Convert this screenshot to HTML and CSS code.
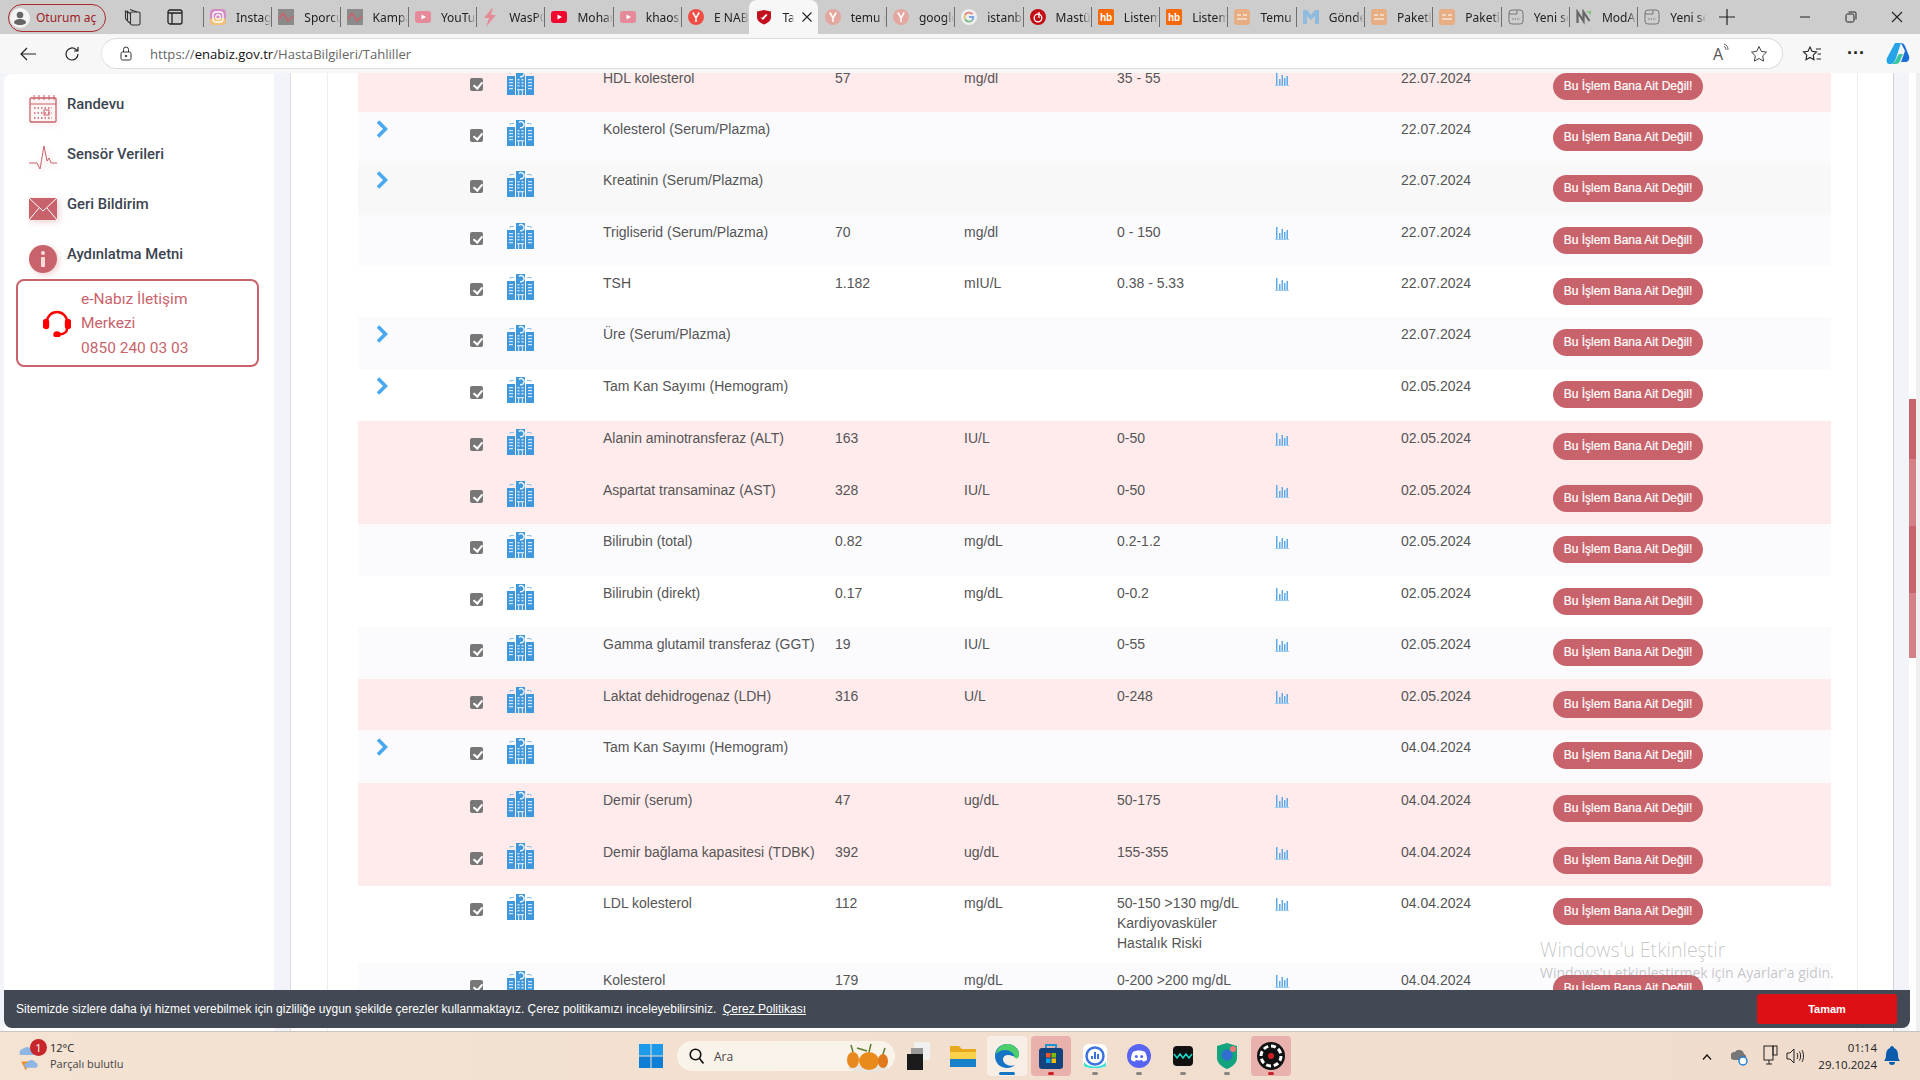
FILE: index.html
```html
<!DOCTYPE html>
<html lang="tr">
<head>
<meta charset="utf-8">
<title>Tahliller</title>
<link rel="stylesheet" href="styles.css">
</head>
<body>
<svg class="defs" width="0" height="0" aria-hidden="true">
  <defs>
    <symbol id="building" viewBox="0 0 27 26">
      <path fill="#3f98dc" d="M9 0h9v26H9zM0 7h8v19H0zM19 7h8v19h-8z"/>
      <path fill="none" stroke="#8ec2ea" stroke-width="1" d="M3 5V3.500h4M24 5V3.500h-4"/>
      <path fill="none" stroke="#eaf4fc" stroke-width="1.400" d="M12 2.500a3 3 0 1 1 1 5"/>
      <path fill="#cfe4f6" d="M10.500 10h2v1.500h-2zM14.500 10h2v1.500h-2zM10.500 13h2v1.500h-2zM14.500 13h2v1.500h-2zM10.500 16h2v1.500h-2zM14.500 16h2v1.500h-2zM2 10h4v1.200H2zM2 13h4v1.200H2zM2 16h4v1.200H2zM2 19h4v1.200H2zM21 10h4v1.200h-4zM21 13h4v1.200h-4zM21 16h4v1.200h-4zM21 19h4v1.200h-4zM10 20h7v1.200h-7zM11 21h1.200v5H11zM14.800 21H16v5h-1.200z"/>
    </symbol>
    <symbol id="chart" viewBox="0 0 14 13">
      <path fill="#5fabe8" d="M1 0h1.500v12H1zM4 6h1.500v6H4zM6.500 2H8v10H6.500zM9 5h1.500v7H9zM11.500 3H13v9h-1.500z"/>
      <path fill="#9ccdf2" d="M0 12h14v1H0z"/>
    </symbol>
    <symbol id="chev" viewBox="0 0 12 18">
      <path fill="none" stroke="#4aa8ee" stroke-width="3.600" d="M2 1.500 9.500 9 2 16.500"/>
    </symbol>
    <symbol id="ig" viewBox="0 0 16 16">
      <rect width="16" height="16" rx="4" fill="#d58bc4"/>
      <rect x="0" y="9" width="16" height="7" rx="3" fill="#f0c27a"/>
      <rect x="3" y="3" width="10" height="10" rx="3" fill="none" stroke="#fff" stroke-width="1.300"/>
      <circle cx="8" cy="8" r="2.300" fill="none" stroke="#fff" stroke-width="1.200"/>
    </symbol>
    <symbol id="wave" viewBox="0 0 16 16">
      <rect width="16" height="16" fill="#8b8b8b"/>
      <path fill="none" stroke="#c9646c" stroke-width="1.600" d="M1 10 5 4l5 8 5-5"/>
    </symbol>
    <symbol id="yt" viewBox="0 0 16 16">
      <rect y="2" width="16" height="12" rx="3" fill="currentColor"/>
      <path fill="#fff" d="M6.500 5.500 11 8l-4.500 2.500z"/>
    </symbol>
    <symbol id="bolt" viewBox="0 0 16 20">
      <path fill="#e58c97" d="M10 0 1 11h5l-3 9 10-12H8z"/>
    </symbol>
    <symbol id="yan" viewBox="0 0 16 16">
      <circle cx="8" cy="8" r="8" fill="currentColor"/>
      <path fill="none" stroke="#fff" stroke-width="1.500" d="M4.800 3.500 8 9l3.200-5.500M8 9v4"/>
    </symbol>
    <symbol id="shield" viewBox="0 0 16 16">
      <path fill="#c2101e" d="M1 2.500 8 1l7 1.500V8c0 4-3.500 6-7 7.500C4.500 14 1 12 1 8z"/>
      <path fill="#fff" d="m4 8 2 1 4-4 1.500 1L7 11z"/>
    </symbol>
    <symbol id="goog" viewBox="0 0 16 16">
      <circle cx="8" cy="8" r="8" fill="#efefef"/>
      <path fill="none" stroke="#e2857b" stroke-width="1.800" d="M11.500 5.300A4.500 4.500 0 0 0 4 6"/>
      <path fill="none" stroke="#e3c566" stroke-width="1.800" d="M4 6a4.500 4.500 0 0 0 0 4"/>
      <path fill="none" stroke="#7fbb8b" stroke-width="1.800" d="M4 10a4.500 4.500 0 0 0 7.500 1"/>
      <path fill="none" stroke="#7da5ea" stroke-width="1.800" d="M8 8h4.300a4.500 4.500 0 0 1-.8 3"/>
    </symbol>
    <symbol id="mastu" viewBox="0 0 16 16">
      <circle cx="8" cy="8" r="8" fill="#c20d14"/>
      <circle cx="8" cy="9" r="3.800" fill="none" stroke="#fff" stroke-width="1.300"/>
      <path stroke="#fff" stroke-width="1.300" d="M9 3v6"/>
    </symbol>
    <symbol id="hb" viewBox="0 0 16 16">
      <rect width="16" height="16" rx="1.500" fill="#f46a0a"/>
      <text x="8" y="12" text-anchor="middle" class="hbt">hb</text>
    </symbol>
    <symbol id="temu" viewBox="0 0 16 16">
      <rect width="16" height="16" rx="3" fill="#e6ae82"/>
      <path fill="none" stroke="#fff" stroke-width="1" d="M3 6h4M9 6h4M3 10h10"/>
    </symbol>
    <symbol id="mail" viewBox="0 0 16 16">
      <path fill="#8fbbdf" d="M0 1h4l4 5 4-5h4v14h-4V7l-4 4-4-4v8H0z"/>
    </symbol>
    <symbol id="newt" viewBox="0 0 16 16">
      <rect x="1" y="1" width="14" height="14" rx="3" fill="none" stroke="#777" stroke-width="1"/>
      <path stroke="#777" fill="none" d="M1 5h8V1"/>
      <path stroke="#777" stroke-dasharray="1.500 1" d="M4 10h8"/>
    </symbol>
    <symbol id="mod" viewBox="0 0 16 16">
      <path fill="none" stroke="#666" stroke-width="2.200" d="M1.500 14V3l6 9V3l6 9"/>
      <path fill="#7fc37f" d="M10 2h5v4z"/>
    </symbol>
  </defs>
</svg>

<header class="tabbar">
  <div class="profile">
    <span class="avatar"><svg width="20" height="20" viewBox="0 0 20 20"><circle cx="10" cy="10" r="10" fill="#f4f4f4"/><circle cx="10" cy="7" r="3.300" fill="#666"/><path fill="#666" d="M4 15c0-3 3-4 6-4s6 1 6 4c-1.500 1.500-3.500 2-6 2s-4.500-.5-6-2z"/></svg></span>
    <span class="profile-label">Oturum aç</span>
  </div>
  <span class="chrome-ico ws"><svg width="18" height="18" viewBox="0 0 18 18" fill="none" stroke="#333" stroke-width="1.100"><rect x="6.500" y="4" width="9.500" height="13" rx="1.500"/><path d="M6.500 15.500 3.500 13V3.500l3 2.500M3.500 13 1.500 10.500V3l2 1.500M6 1.500l7 2.500"/></svg></span>
  <span class="chrome-ico vt"><svg width="16" height="16" viewBox="0 0 16 16" fill="none" stroke="#222" stroke-width="1.300"><rect x="1" y="1" width="14" height="14" rx="2"/><path d="M1 4h14M5 4v11"/></svg></span>
  <nav class="tabs">
    <div class="tab"><svg class="fav"><use href="#ig"/></svg><span class="ttl">Instagram</span></div>
    <div class="tab"><svg class="fav"><use href="#wave"/></svg><span class="ttl">Sporcu</span></div>
    <div class="tab"><svg class="fav"><use href="#wave"/></svg><span class="ttl">Kampanya</span></div>
    <div class="tab"><svg class="fav pink"><use href="#yt"/></svg><span class="ttl">YouTube</span></div>
    <div class="tab"><svg class="fav tall"><use href="#bolt"/></svg><span class="ttl">WasPC</span></div>
    <div class="tab"><svg class="fav red"><use href="#yt"/></svg><span class="ttl">Mohammed</span></div>
    <div class="tab"><svg class="fav pink"><use href="#yt"/></svg><span class="ttl">khaos_</span></div>
    <div class="tab"><svg class="fav yred"><use href="#yan"/></svg><span class="ttl">E NABIZ</span></div>
    <div class="tab active"><svg class="fav"><use href="#shield"/></svg><span class="ttl short">Ta</span><svg class="close" width="10" height="10" viewBox="0 0 10 10"><path stroke="#222" stroke-width="1.100" d="m.5.5 9 9M9.500.5l-9 9"/></svg></div>
    <div class="tab noline"><svg class="fav ypale"><use href="#yan"/></svg><span class="ttl">temu g</span></div>
    <div class="tab"><svg class="fav ypale"><use href="#yan"/></svg><span class="ttl">google</span></div>
    <div class="tab"><svg class="fav"><use href="#goog"/></svg><span class="ttl">istanbul</span></div>
    <div class="tab"><svg class="fav"><use href="#mastu"/></svg><span class="ttl">Mastür</span></div>
    <div class="tab"><svg class="fav"><use href="#hb"/></svg><span class="ttl">Listem</span></div>
    <div class="tab"><svg class="fav"><use href="#hb"/></svg><span class="ttl">Listem</span></div>
    <div class="tab"><svg class="fav"><use href="#temu"/></svg><span class="ttl">Temu</span></div>
    <div class="tab"><svg class="fav"><use href="#mail"/></svg><span class="ttl">Gönder</span></div>
    <div class="tab"><svg class="fav"><use href="#temu"/></svg><span class="ttl">Paketle</span></div>
    <div class="tab"><svg class="fav"><use href="#temu"/></svg><span class="ttl">Paketle</span></div>
    <div class="tab"><svg class="fav"><use href="#newt"/></svg><span class="ttl">Yeni sekme</span></div>
    <div class="tab"><svg class="fav"><use href="#mod"/></svg><span class="ttl">ModAr</span></div>
    <div class="tab"><svg class="fav"><use href="#newt"/></svg><span class="ttl">Yeni sekme</span></div>
  </nav>
  <span class="plus"><svg width="16" height="16" viewBox="0 0 16 16"><path stroke="#222" stroke-width="1.200" d="M8 0v16M0 8h16"/></svg></span>
  <div class="winctl">
    <svg width="12" height="12" viewBox="0 0 12 12"><path stroke="#222" d="M1 6h10"/></svg>
    <svg width="12" height="12" viewBox="0 0 12 12" fill="none" stroke="#222"><rect x="1" y="3" width="8" height="8" rx="1.500"/><path d="M3.500 1H10a1 1 0 0 1 1 1v6.500"/></svg>
    <svg width="12" height="12" viewBox="0 0 12 12"><path stroke="#222" stroke-width="1.100" d="m1 1 10 10M11 1 1 11"/></svg>
  </div>
</header>

<div class="toolbar">
  <svg class="back" width="16" height="14" viewBox="0 0 16 14" fill="none" stroke="#222" stroke-width="1.200"><path d="M16 7H1M7 1 1 7l6 6"/></svg>
  <svg class="reload" width="16" height="16" viewBox="0 0 16 16" fill="none" stroke="#222" stroke-width="1.200"><path d="M14 8a6 6 0 1 1-2-4.500L14 5M14 1v4h-4"/></svg>
  <div class="addr">
    <svg width="12" height="15" viewBox="0 0 12 15" fill="none" stroke="#333"><rect x="1" y="6" width="10" height="8" rx="1.500"/><path d="M3.500 6V3.500a2.500 2.500 0 0 1 5 0V6"/><circle cx="6" cy="10" r=".8" fill="#333"/></svg>
    <span class="url">https://<b>enabiz.gov.tr</b>/HastaBilgileri/Tahliller</span>
    <span class="addr-end">
      <span class="aa">A<svg width="7" height="9" viewBox="0 0 7 9" fill="none" stroke="#666"><path d="M1 1c3 1 4 3 4 6M1 3.500c1.500.5 2 2 2 3.500"/></svg></span>
      <svg width="18" height="18" viewBox="0 0 18 18" fill="none" stroke="#444"><path d="m9 1.500 2.300 4.900 5.200.7-3.800 3.700.9 5.300L9 13.500l-4.600 2.600.9-5.300L1.500 7.100l5.200-.7z"/></svg>
    </span>
  </div>
  <svg class="favs" width="20" height="18" viewBox="0 0 20 18" fill="none" stroke="#222" stroke-width="1.100"><path d="m8 2 2 4.300 4.500.6-3.300 3.200.8 4.600L8 12.500l-4 2.200.8-4.600L1.500 6.900 6 6.300zM14 4h5M15.500 9H19M14.500 14H19"/></svg>
  <span class="dots">···</span>
  <svg class="copilot" width="24" height="24" viewBox="0 0 24 24"><path fill="#27a3e8" d="M9 1h6l-4 12c-1 4-3 9-6 9H3c-2 0-3-3-2-6z"/><path fill="#1d6fd8" d="M15 1c2 0 3 1 4 3l4 10c1 3-1 6-3 6h-5l4-11z"/><path fill="#37c8a0" d="M5 22c3 0 5-4 6-7l2-3h4l-3 7c-1 2-2 3-4 3z"/></svg>
</div>

<main class="page">
  <aside class="sidebar">
    <ul class="menu">
      <li class="menu-item">
        <svg class="mi" viewBox="0 0 28 28" fill="none" stroke="#c9636b"><rect x="1" y="3" width="26" height="24" rx="1" stroke-width="1.300"/><path d="M1 9h26M5 0v5M10 0v5M15 0v5M20 0v5M25 0v5"/><path d="M5 13h18M5 18h18M5 23h18" stroke-dasharray="1.500 2" stroke-width="1.500"/><rect x="15" y="15" width="5" height="5"/></svg>
        <span>Randevu</span>
      </li>
      <li class="menu-item">
        <svg class="mi" viewBox="0 0 28 28" fill="none" stroke="#c9636b" stroke-width="1"><path d="M0 18h8l3 6 4-23 3 15 2-3 2 5h6"/></svg>
        <span>Sensör Verileri</span>
      </li>
      <li class="menu-item">
        <svg class="mi" viewBox="0 0 28 28"><path fill="#c9636b" d="M0 3h28v22H0z"/><path fill="none" stroke="#fff" d="m0 3 14 13L28 3M0 25l10-12M28 25 18 13"/></svg>
        <span>Geri Bildirim</span>
      </li>
      <li class="menu-item">
        <svg class="mi" viewBox="0 0 28 28"><circle cx="14" cy="14" r="14" fill="#c9636b"/><circle cx="14" cy="8" r="2" fill="#f8dcdc"/><rect x="12" y="12" width="4" height="10" rx="1" fill="#f8dcdc"/></svg>
        <span>Aydınlatma Metni</span>
      </li>
    </ul>
    <div class="contact">
      <svg class="headset" width="28" height="28" viewBox="0 0 28 28" fill="none" stroke="#f00" stroke-width="2.400"><path d="M4 13a10 10 0 0 1 20 0M24 17v3c0 3-3 5-8 5.500"/><rect x="1" y="11" width="4" height="8" rx="2" fill="#f00"/><rect x="23" y="11" width="4" height="8" rx="2" fill="#f00"/><ellipse cx="14" cy="25.500" rx="2.500" ry="2" fill="#f00"/></svg>
      <p>e-Nabız İletişim<br>Merkezi<br>0850 240 03 03</p>
    </div>
  </aside>

  <section class="panel">
    <div class="panel-inner">
      <div class="results">
        <div class="row pink h51"><span></span><i class="cb"></i><svg class="bld"><use href="#building"/></svg><span>HDL kolesterol</span><span>57</span><span>mg/dl</span><span>35 - 55</span><svg class="ch"><use href="#chart"/></svg><span>22.07.2024</span><button class="pill">Bu İşlem Bana Ait Değil!</button></div>
        <div class="row blue h51"><svg class="chev"><use href="#chev"/></svg><i class="cb"></i><svg class="bld"><use href="#building"/></svg><span>Kolesterol (Serum/Plazma)</span><span></span><span></span><span></span><span></span><span>22.07.2024</span><button class="pill">Bu İşlem Bana Ait Değil!</button></div>
        <div class="row grey h52"><svg class="chev"><use href="#chev"/></svg><i class="cb"></i><svg class="bld"><use href="#building"/></svg><span>Kreatinin (Serum/Plazma)</span><span></span><span></span><span></span><span></span><span>22.07.2024</span><button class="pill">Bu İşlem Bana Ait Değil!</button></div>
        <div class="row blue h51"><span></span><i class="cb"></i><svg class="bld"><use href="#building"/></svg><span>Trigliserid (Serum/Plazma)</span><span>70</span><span>mg/dl</span><span>0 - 150</span><svg class="ch"><use href="#chart"/></svg><span>22.07.2024</span><button class="pill">Bu İşlem Bana Ait Değil!</button></div>
        <div class="row h51"><span></span><i class="cb"></i><svg class="bld"><use href="#building"/></svg><span>TSH</span><span>1.182</span><span>mIU/L</span><span>0.38 - 5.33</span><svg class="ch"><use href="#chart"/></svg><span>22.07.2024</span><button class="pill">Bu İşlem Bana Ait Değil!</button></div>
        <div class="row blue h52"><svg class="chev"><use href="#chev"/></svg><i class="cb"></i><svg class="bld"><use href="#building"/></svg><span>Üre (Serum/Plazma)</span><span></span><span></span><span></span><span></span><span>22.07.2024</span><button class="pill">Bu İşlem Bana Ait Değil!</button></div>
        <div class="row h52"><svg class="chev"><use href="#chev"/></svg><i class="cb"></i><svg class="bld"><use href="#building"/></svg><span>Tam Kan Sayımı (Hemogram)</span><span></span><span></span><span></span><span></span><span>02.05.2024</span><button class="pill">Bu İşlem Bana Ait Değil!</button></div>
        <div class="row pink h52"><span></span><i class="cb"></i><svg class="bld"><use href="#building"/></svg><span>Alanin aminotransferaz (ALT)</span><span>163</span><span>IU/L</span><span>0-50</span><svg class="ch"><use href="#chart"/></svg><span>02.05.2024</span><button class="pill">Bu İşlem Bana Ait Değil!</button></div>
        <div class="row pink h51"><span></span><i class="cb"></i><svg class="bld"><use href="#building"/></svg><span>Aspartat transaminaz (AST)</span><span>328</span><span>IU/L</span><span>0-50</span><svg class="ch"><use href="#chart"/></svg><span>02.05.2024</span><button class="pill">Bu İşlem Bana Ait Değil!</button></div>
        <div class="row blue h52"><span></span><i class="cb"></i><svg class="bld"><use href="#building"/></svg><span>Bilirubin (total)</span><span>0.82</span><span>mg/dL</span><span>0.2-1.2</span><svg class="ch"><use href="#chart"/></svg><span>02.05.2024</span><button class="pill">Bu İşlem Bana Ait Değil!</button></div>
        <div class="row h51"><span></span><i class="cb"></i><svg class="bld"><use href="#building"/></svg><span>Bilirubin (direkt)</span><span>0.17</span><span>mg/dL</span><span>0-0.2</span><svg class="ch"><use href="#chart"/></svg><span>02.05.2024</span><button class="pill">Bu İşlem Bana Ait Değil!</button></div>
        <div class="row blue h52"><span></span><i class="cb"></i><svg class="bld"><use href="#building"/></svg><span>Gamma glutamil transferaz (GGT)</span><span>19</span><span>IU/L</span><span>0-55</span><svg class="ch"><use href="#chart"/></svg><span>02.05.2024</span><button class="pill">Bu İşlem Bana Ait Değil!</button></div>
        <div class="row pink h51"><span></span><i class="cb"></i><svg class="bld"><use href="#building"/></svg><span>Laktat dehidrogenaz (LDH)</span><span>316</span><span>U/L</span><span>0-248</span><svg class="ch"><use href="#chart"/></svg><span>02.05.2024</span><button class="pill">Bu İşlem Bana Ait Değil!</button></div>
        <div class="row blue h53"><svg class="chev"><use href="#chev"/></svg><i class="cb"></i><svg class="bld"><use href="#building"/></svg><span>Tam Kan Sayımı (Hemogram)</span><span></span><span></span><span></span><span></span><span>04.04.2024</span><button class="pill">Bu İşlem Bana Ait Değil!</button></div>
        <div class="row pink h52"><span></span><i class="cb"></i><svg class="bld"><use href="#building"/></svg><span>Demir (serum)</span><span>47</span><span>ug/dL</span><span>50-175</span><svg class="ch"><use href="#chart"/></svg><span>04.04.2024</span><button class="pill">Bu İşlem Bana Ait Değil!</button></div>
        <div class="row pink h51"><span></span><i class="cb"></i><svg class="bld"><use href="#building"/></svg><span>Demir bağlama kapasitesi (TDBK)</span><span>392</span><span>ug/dL</span><span>155-355</span><svg class="ch"><use href="#chart"/></svg><span>04.04.2024</span><button class="pill">Bu İşlem Bana Ait Değil!</button></div>
        <div class="row h75"><span></span><i class="cb"></i><svg class="bld"><use href="#building"/></svg><span>LDL kolesterol</span><span>112</span><span>mg/dL</span><span>50-150 &gt;130 mg/dL<br>Kardiyovasküler<br>Hastalık Riski</span><svg class="ch"><use href="#chart"/></svg><span>04.04.2024</span><button class="pill">Bu İşlem Bana Ait Değil!</button></div>
        <div class="row blue h52"><span></span><i class="cb"></i><svg class="bld"><use href="#building"/></svg><span>Kolesterol</span><span>179</span><span>mg/dL</span><span>0-200 &gt;200 mg/dL</span><svg class="ch"><use href="#chart"/></svg><span>04.04.2024</span><button class="pill">Bu İşlem Bana Ait Değil!</button></div>
      </div>
    </div>
  </section>
  <div class="scroll"><div class="thumb"></div></div>

  <div class="watermark">
    <div class="wm1">Windows'u Etkinleştir</div>
    <div class="wm2">Windows'u etkinleştirmek için Ayarlar'a gidin.</div>
  </div>

  <div class="cookie">
    <p>Sitemizde sizlere daha iyi hizmet verebilmek için gizliliğe uygun şekilde çerezler kullanmaktayız. Çerez politikamızı inceleyebilirsiniz. <a>Çerez Politikası</a></p>
    <button class="ok">Tamam</button>
  </div>
</main>

<footer class="taskbar">
  <div class="weather">
    <svg class="wx" width="28" height="32" viewBox="0 0 26 28"><path fill="#8db6e4" d="M2 13a4 4 0 0 1 3-6 5 5 0 0 1 7 0l3 6z"/><path fill="#f08a1e" d="M3 19h10l-6 8z"/><path fill="#8db6e4" d="M8 25c-3 0-3-5 1-5 1-3 6-3 7 0 3 0 3 5 0 5z"/></svg>
    <span class="badge">1</span>
    <div class="wx-text"><div class="temp">12°C</div><div class="cond">Parçalı bulutlu</div></div>
  </div>
  <div class="center">
    <svg class="winlogo" width="24" height="24" viewBox="0 0 24 24"><path fill="#1d9bea" d="M0 0h11.500v11.500H0zM12.500 0H24v11.500H12.500z"/><path fill="#0f7fd6" d="M0 12.500h11.500V24H0zM12.500 12.500H24V24H12.500z"/></svg>
    <div class="search">
      <svg width="15" height="16" viewBox="0 0 15 16" fill="none" stroke="#111" stroke-width="1.600"><circle cx="6.500" cy="6.500" r="5.300"/><path d="m10.500 10.500 4 5"/></svg>
      <span>Ara</span>
      <svg class="pump" width="44" height="30" viewBox="0 0 44 30"><ellipse cx="23" cy="26" rx="20" ry="4" fill="#e8e4de"/><ellipse cx="8" cy="18" rx="6" ry="8" fill="#e8881f"/><ellipse cx="24" cy="19" rx="10" ry="9" fill="#ea8a1a"/><ellipse cx="38" cy="19" rx="5" ry="7" fill="#e0781c"/><path stroke="#5c7c2f" stroke-width="1.500" fill="none" d="M8 10 6 3M24 10l2-8M38 12l2-6M12 6l10 3"/></svg>
    </div>
    <span class="tb"><svg width="24" height="30" viewBox="0 0 24 30"><path fill="#f0f0f0" d="M7 1h16v18H7z"/><path fill="#9a9a9a" d="M4 7h12v12H4z"/><path fill="#1b1b1b" d="M0 13h16v16H0z"/></svg></span>
    <span class="tb"><svg width="28" height="24" viewBox="0 0 28 24"><path fill="#e8a91f" d="M1 2h9l3 3h14v4H1z"/><path fill="#fbd14b" d="M1 8h26v10H1z"/><path fill="#1680c9" d="M1 15h26v8H1z"/></svg></span>
    <span class="tb edge"><svg width="24" height="24" viewBox="0 0 24 24"><path fill="#1574c4" d="M12 0C5 0 0 5 0 12c0 7 5 12 12 12 3 0 6-1 8-3-6 2-12-1-12-6 0-2 2-4 5-4s5 1 7 2c2 1 4 0 4-3C24 5 19 0 12 0z"/><path fill="#4cce6b" d="M12 0c7 0 12 5 12 11 0 3-2 4-4 3-1-5-5-8-10-8-4 0-7 2-9 4 1-6 6-10 11-10z"/></svg></span>
    <span class="tb hot dot-red"><svg width="24" height="28" viewBox="0 0 24 28"><path fill="none" stroke="#1a95ce" stroke-width="2" d="M7 7V3h10v4"/><rect y="6" width="24" height="21" rx="3" fill="#12437d"/><path fill="#f35325" d="M7 11h4.500v4.500H7z"/><path fill="#81bc06" d="M12.500 11H17v4.500h-4.500z"/><path fill="#05a6f0" d="M7 16.500h4.500V21H7z"/><path fill="#ffba08" d="M12.500 16.500H17V21h-4.500z"/></svg></span>
    <span class="tb dot-grey"><svg width="24" height="24" viewBox="0 0 24 24"><rect width="24" height="24" rx="6" fill="#fff"/><circle cx="12" cy="12" r="8.500" fill="#fff" stroke="#3d73e0" stroke-width="2.500"/><path stroke="#3d73e0" stroke-width="2" d="M9 15v-3M12 15V8M15 15v-5"/><path fill="#3de0d5" d="M1 18c4 6 18 6 22 0v4c-5 3-17 3-22 0z"/></svg></span>
    <span class="tb dot-grey"><svg width="24" height="24" viewBox="0 0 24 24"><circle cx="12" cy="12" r="12" fill="#5865f2"/><path fill="#fff" d="M6 8c3-2 9-2 12 0 2 3 2 6 2 8-2 1-3 1.500-4 1.500l-1-1.500c-2 .500-4 .500-6 0l-1 1.500c-1 0-2-.5-4-1.500 0-2 0-5 2-8z"/><circle cx="9.300" cy="12.500" r="1.500" fill="#5865f2"/><circle cx="14.700" cy="12.500" r="1.500" fill="#5865f2"/></svg></span>
    <span class="tb dot-grey"><svg width="20" height="20" viewBox="0 0 20 20"><rect width="20" height="20" rx="4" fill="#111"/><path fill="none" stroke="#1ed8c7" stroke-width="1.500" d="M1 8l3 4 3-4 3 4 3-4 3 4 3-4"/></svg></span>
    <span class="tb dot-grey"><svg width="20" height="26" viewBox="0 0 20 26"><path fill="#12a37f" d="M10 0 20 3v12c0 5-5 9-10 11C5 24 0 20 0 15V3z"/><circle cx="10" cy="12" r="5.500" fill="#2f6fd0"/><circle cx="16" cy="6" r="3" fill="#e77"/></svg></span>
    <span class="tb hot dot-red"><svg width="28" height="28" viewBox="0 0 28 28"><circle cx="14" cy="14" r="14" fill="#111"/><circle cx="14" cy="14" r="10" fill="none" stroke="#fff" stroke-width="3" stroke-dasharray="5 2.800"/><circle cx="14" cy="14" r="3" fill="#d02020"/></svg></span>
  </div>
  <div class="tray">
    <svg class="t-up" width="10" height="6" viewBox="0 0 10 6" fill="none" stroke="#111" stroke-width="1.200"><path d="m1 5.500 4-4.500 4 4.500"/></svg>
    <svg class="t-cloud" width="18" height="18" viewBox="0 0 18 18"><path fill="#777" d="M3 12a4 4 0 0 1 1-8 5 5 0 0 1 9 2c3 1 3 6 0 6z"/><circle cx="12" cy="13" r="4" fill="#fff" stroke="#1c7fd6" stroke-width="1.400"/></svg>
    <svg class="t-net" width="16" height="20" viewBox="0 0 16 20" fill="none" stroke="#222"><rect x="1" y="1" width="9" height="14"/><rect x="10" y="1" width="4" height="9"/><path d="M3 19h6M6 15v4"/></svg>
    <svg class="t-vol" width="18" height="16" viewBox="0 0 18 16" fill="none" stroke="#222"><path d="M1 5h3l4-4v14l-4-4H1z"/><path d="M11 5c1 2 1 4 0 6M13.500 3.500c1.500 3 1.500 6 0 9M16 2c2 4 2 8 0 12"/></svg>
    <div class="clock"><div>01:14</div><div>29.10.2024</div></div>
    <svg class="t-bell" width="16" height="20" viewBox="0 0 16 20"><path fill="#0b5cad" d="M8 0c1 0 2 1 2 2 3 1 4 4 4 7 0 3 1 5 2 6H0c1-1 2-3 2-6 0-3 1-6 4-7 0-1 1-2 2-2zM5 16h6a3 3 0 0 1-6 0z"/></svg>
  </div>
</footer>
</body>
</html>
```

FILE: styles.css
```css
* { box-sizing: border-box; }
html, body { margin: 0; height: 100%; overflow: hidden; }
body { width: 1920px; height: 1080px; display: flex; flex-direction: column; font-family: "Liberation Sans", Arial, sans-serif; background: #fff; }
.defs { position: absolute; }
.hbt { font: bold 10px "Liberation Sans", sans-serif; fill: #fff; }

/* tab strip */
.tabbar { height: 34px; flex: none; background: #cdcdcd; display: flex; align-items: center; padding-left: 8px; font-family: "Noto Sans", sans-serif; font-size: 12px; color: #222; }
.profile { width: 98px; height: 28px; margin-top: 1px; border: 1.500px solid #a8292f; border-radius: 14px; display: flex; align-items: center; padding-left: 1px; gap: 6px; flex: none; }
.avatar { display: flex; }
.profile-label { color: #a01e24; font-size: 12px; }
.chrome-ico { display: flex; flex: none; }
.ws { margin-left: 18px; }
.vt { margin-left: 25px; margin-right: 20px; }
.tabs { display: flex; width: 1502.600px; flex: none; height: 34px; }
.tab { width: 68.300px; flex: none; height: 34px; display: flex; align-items: center; padding-left: 6px; position: relative; border-left: 1px solid #6f6f6f; }
.tab::before { content: ""; position: absolute; left: -1px; top: 0; width: 1px; height: 7px; background: #cdcdcd; }
.tab::after { content: ""; position: absolute; left: -1px; bottom: 0; width: 1px; height: 7px; background: #cdcdcd; }
.tab.active, .tab.noline { border-left-color: transparent; }
.tab.active::before, .tab.active::after, .tab.noline::before, .tab.noline::after { display: none; }
.tab.active { background: #f7f7f7; border-radius: 8px 8px 0 0; }
.fav { width: 16px; height: 16px; flex: none; }
.fav.tall { height: 22px; }
.pink { color: #e68a99; }
.red { color: #f0062f; }
.yred { color: #f04e45; }
.ypale { color: #e3a79f; }
.ttl { margin-left: 10px; overflow: hidden; white-space: nowrap; flex: 1; min-width: 0; mask-image: linear-gradient(to right, #000 75%, transparent 100%); }
.short { flex: none; width: 12px; }
.close { margin-left: 8px; flex: none; }
.plus { margin-left: 13px; display: flex; flex: none; }
.winctl { margin-left: auto; display: flex; gap: 34px; padding-right: 17px; }

/* toolbar */
.toolbar { height: 39px; flex: none; background: #f7f7f7; display: flex; align-items: center; position: relative; }
.back { margin-left: 20px; flex: none; }
.reload { margin-left: 28px; flex: none; }
.addr { margin-left: 21px; width: 1682px; height: 31px; background: #fff; border: 1px solid #dcdcdc; border-left-color: #e6e6e6; border-radius: 16px; display: flex; align-items: center; padding-left: 18px; flex: none; font-family: "Open Sans", sans-serif; font-size: 13.100px; color: #666; }
.url { margin-left: 18px; }
.url b { font-weight: 400; color: #111; }
.addr-end { margin-left: auto; display: flex; align-items: center; gap: 20px; padding-right: 14px; }
.aa { font-size: 16px; color: #555; display: flex; align-items: flex-start; }
.favs { margin-left: 19px; flex: none; }
.dots { margin-left: 25px; font-size: 18px; font-weight: bold; color: #222; width: 20px; }
.copilot { margin-left: 19px; flex: none; }

/* page */
.page { flex: 1; min-height: 0; background: #f3f4fa; position: relative; display: flex; overflow: hidden; border-bottom: 1px solid #c8c4c0; }
.sidebar { width: 270px; margin: 1px 0 0 4px; background: #fff; border-radius: 8px 0 0 0; flex: none; padding-top: 16px; font-family: Roboto, sans-serif; }
.menu { list-style: none; margin: 0; padding: 0 0 0 25px; display: grid; grid-auto-rows: 50px; }
.menu-item { display: flex; gap: 10px; align-items: flex-start; font-size: 14.800px; font-weight: 500; color: #3c4450; padding-top: 5px; }
.menu-item span { line-height: 20px; margin-top: -1px; }
.mi { width: 28px; height: 28px; flex: none; filter: drop-shadow(2px 2px 3px rgba(201, 99, 107, .3)); }
.contact { width: 243px; height: 88px; margin: -11px 0 0 12px; border: 2px solid #c9636b; border-radius: 8px; display: flex; align-items: center; position: relative; background: #fff; }
.headset { margin-left: 25px; flex: none; }
.contact p { margin: 1px 0 0 10px; color: #c9636b; font-size: 15.500px; line-height: 24.500px; }
.panel { width: 1604px; margin-left: 16px; flex: none; background: #fff; border-left: 1px solid #dcdcdc; border-right: 1px solid #cfcfcf; padding: 0 35px 0 36px; }
.panel-inner { height: 100%; border-left: 1px solid #eee; border-right: 1px solid #eee; padding: 0 26px 0 30px; overflow: hidden; }
.results { margin-top: -12px; }

.row { display: grid; grid-template-columns: 112px 37px 96px 232px 129px 153px 158px 126px 152px 1fr; font-size: 14px; line-height: 20px; color: #555; padding-top: 7px; }
.chev { width: 12px; height: 18px; margin: 1px 0 0 18px; }
.h51 { height: 51px; }
.h52 { height: 52px; }
.h53 { height: 53px; }
.h75 { height: 77px; }
.pink.row { background: #ffebec; color: #555; }
.blue { background: #fbfbfe; }
.grey { background: #f8f8f8; }
.cb { width: 13px; height: 13px; margin-top: 10px; background: #777; border-radius: 2px; position: relative; }
.cb::after { content: ""; position: absolute; left: 4.500px; top: 1.500px; width: 4px; height: 7px; border: solid #fff; border-width: 0 2px 2px 0; transform: rotate(40deg); }
.bld { width: 27px; height: 26px; margin-top: 1px; }
.ch { width: 14px; height: 13px; margin-top: 5px; }
.pill { width: 150px; height: 27px; margin-top: 5px; border: 0; border-radius: 14px; background: #c9636b; color: #fff; padding: 0; font: 12px/27px "Liberation Sans", sans-serif; -webkit-text-stroke: .2px #fff; }
.scroll { width: 7px; margin-left: 15px; background: #fff; flex: none; position: relative; }
.thumb { width: 7px; height: 259px; margin-top: 326px; background: linear-gradient(to bottom, #c9636b 0 23%, #d48087 23% 49%, #c9636b 49% 75%, #d48087 75% 100%); }
.page::after { content: ""; position: absolute; right: 0; top: 0; bottom: 0; width: 4px; background: #efefef; }

/* overlays */
.watermark { position: absolute; left: 1540px; top: 864px; font-family: "Open Sans", sans-serif; color: rgba(120, 120, 120, .42); pointer-events: none; white-space: nowrap; }
.wm1 { font-size: 19.500px; font-weight: 300; line-height: 26px; }
.wm2 { font-size: 14px; line-height: 20px; }
.cookie { position: absolute; left: 4px; width: 1906px; top: 917px; height: 38px; background: #424954; border-radius: 0 0 8px 8px; display: flex; align-items: center; padding: 0 13px 0 12px; color: #fff; }
.cookie p { margin: 0; font-size: 12px; }
.cookie a { text-decoration: underline; margin-left: 3px; }
.ok { margin-left: auto; width: 140px; height: 30px; border: 0; border-radius: 3px; background: #dc1015; color: #fff; font: bold 11px "Liberation Sans", sans-serif; }

/* taskbar */
.taskbar { height: 48px; flex: none; background: linear-gradient(to right, #f4e2d2, #efdccd); display: flex; align-items: center; position: relative; font-family: "Open Sans", sans-serif; color: #222; }
.weather { width: 200px; flex: none; position: relative; display: flex; align-items: center; padding-left: 18px; }
.wx { flex: none; }
.badge { position: absolute; left: 30px; top: -1px; width: 17px; height: 17px; border-radius: 50%; background: #c8262a; color: #fff; font-size: 11px; line-height: 17px; text-align: center; }
.wx-text { margin-left: 4px; font-size: 11px; line-height: 16px; }
.cond { color: #444; }
.center { position: absolute; left: 639px; top: 0; bottom: 0; display: flex; align-items: center; }
.search { width: 218px; height: 30px; margin-left: 14px; border-radius: 15px; background: #faf3ea; display: flex; align-items: center; padding-left: 12px; font-size: 12px; color: #444; position: relative; }
.search span { margin-left: 10px; }
.pump { position: absolute; right: 6px; top: 1px; }
.tb { width: 40px; height: 40px; margin-left: 4px; border-radius: 4px; display: flex; align-items: center; justify-content: center; position: relative; flex: none; }
.edge { background: #f7efe6; }
.edge::after { content: ""; position: absolute; left: 12px; bottom: 1px; width: 16px; height: 3px; border-radius: 2px; background: #1574c4; }
.hot { background: #e9b1ab; }
.dot-red::after, .dot-grey::after { content: ""; position: absolute; left: 17px; bottom: 1px; width: 6px; height: 3px; border-radius: 2px; }
.dot-red::after { background: #c8232a; }
.dot-grey::after { background: #8a8580; }
.tray { position: absolute; left: 0; top: 0; width: 100%; height: 100%; pointer-events: none; }
.tray svg { position: absolute; }
.t-up { left: 1702px; top: 22px; }
.t-cloud { left: 1731px; top: 16px; }
.t-net { left: 1763px; top: 13px; }
.t-vol { left: 1786px; top: 16px; }
.t-bell { left: 1884px; top: 14px; }
.clock { position: absolute; right: 43px; top: 7px; text-align: right; font-size: 11.500px; line-height: 17px; color: #222; }
```
